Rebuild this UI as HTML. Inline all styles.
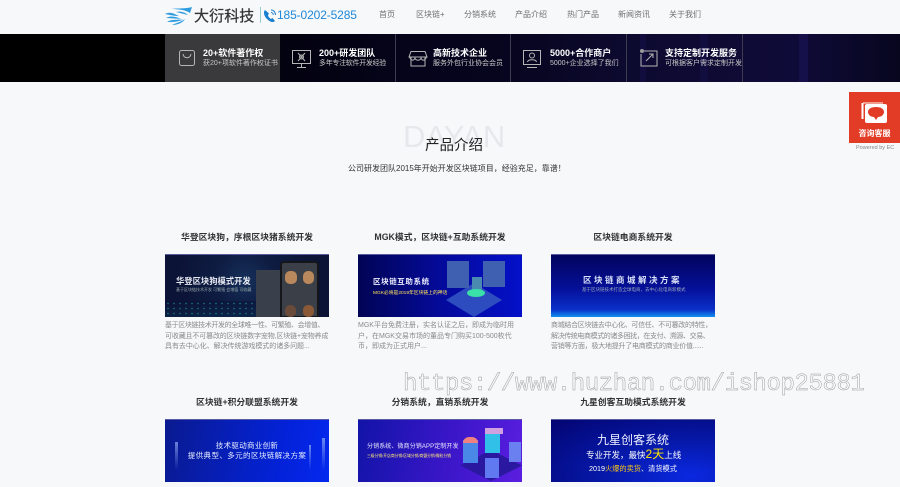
<!DOCTYPE html>
<html lang="zh"><head><meta charset="utf-8"><title>大衍科技</title>
<style>
*{margin:0;padding:0;box-sizing:border-box}
html,body{width:900px;height:487px;overflow:hidden;background:#f6f8fa}
body{position:relative;font-family:"Liberation Sans","Noto Sans CJK SC",sans-serif}
.a{position:absolute;white-space:nowrap}
.nav{top:9px;font-size:8px;color:#707070;line-height:12px}
.band{left:0;top:34px;width:900px;height:48px;background:linear-gradient(90deg,#000 0,#000 165px,#03020f 280px,#05041a 400px,#07051f 510px,#0d0a30 630px,#0f0b38 800px,#0a0828 860px,#07061e 900px)}
.stripe{top:34px;height:48px;background:#15104a}
.div{top:34px;width:1px;height:48px;background:#3c3c50}
.t1{top:47px;font-size:9px;font-weight:bold;color:#fff;line-height:13px}
.t2{top:58px;font-size:7px;color:#c8c8c8;line-height:11px}
.ic{top:44px;width:28px;height:28px}
.h{font-size:8.800px;font-weight:bold;color:#333;line-height:13px;text-align:center;width:164px}
.img{width:164px;height:63px;overflow:hidden;border-top:1px solid #5a5aa0}
.img span,.img i{position:absolute;white-space:nowrap;font-style:normal}
.img div{position:absolute}
.p{font-size:7px;line-height:10.700px;color:#8a8a8a}
.p div{white-space:nowrap}
</style></head><body>

<svg class="a" style="left:165px;top:6px" width="28" height="19" viewBox="0 0 28 19">
<path d="M0 8C6 5 9 8 14 10C9 10 5 9 0 8ZM1 12C6 9 11 11 16 12.500C11 13 6 12 1 12ZM2 16C7 13 12 14 18 13.500C13 16 7 16 2 16ZM7 19C11 17 16 16 20 13C18 17 12 19 7 19ZM6 3C13 2 20 3 27 1L25 7C21 4 13 3 6 3ZM11 6C15 5 20 6 23 9C19 8 15 7 11 6Z" fill="#2f9ce0"/></svg>
<div class="a" style="left:194px;top:7px;font-size:15px;line-height:20px;color:#333;-webkit-text-stroke:.25px #333;letter-spacing:.1px">大衍科技</div>
<div class="a" style="left:260px;top:7px;width:1px;height:16px;background:#9cc"></div>
<svg class="a" style="left:263px;top:8px" width="14" height="15" viewBox="0 0 14 15"><path d="M2 2C0 4 1 8 4 11C7 14 10 15 12 13L9.500 10L8 11C6 10 5 8 5 7L6 5.500Z" fill="#1a7fd0"/><path d="M8 2C10.500 2 12.500 4 12.500 7M8 4.500C9.300 4.500 10.300 5.500 10.300 7" stroke="#1a7fd0" fill="none"/></svg>
<div class="a" style="left:277px;top:7px;font-size:12px;line-height:17px;color:#1f88d8;letter-spacing:-.12px">185-0202-5285</div>
<div class="a nav" style="left:379px">首页</div>
<div class="a nav" style="left:416px">区块链+</div>
<div class="a nav" style="left:464px">分销系统</div>
<div class="a nav" style="left:515px">产品介绍</div>
<div class="a nav" style="left:567px">热门产品</div>
<div class="a nav" style="left:618px">新闻资讯</div>
<div class="a nav" style="left:669px">关于我们</div>

<div class="a band"></div>
<div class="a stripe" style="left:799px;width:9px"></div>
<div class="a stripe" style="left:640px;width:6px;background:#110d3e"></div>
<div class="a stripe" style="left:700px;width:8px;background:#110d3e"></div>
<div class="a" style="left:165px;top:34px;width:115px;height:48px;background:#3a3a3c"></div>
<div class="a div" style="left:395px"></div>
<div class="a div" style="left:510px"></div>
<div class="a div" style="left:626px"></div>
<div class="a div" style="left:742px"></div>

<svg class="a ic" style="left:176px" viewBox="0 0 28 28" fill="none" stroke="#b5b5b5"><rect x="3.500" y="6.500" width="15" height="15" rx="2"/><path d="M7 10C8 15 14 15 15 10"/></svg>
<div class="a t1" style="left:203px">20+软件著作权</div>
<div class="a t2" style="left:203px">获20+项软件著作权证书</div>
<svg class="a ic" style="left:291px" viewBox="0 0 28 28" fill="none" stroke="#b5b5b5"><rect x="1.500" y="6.500" width="18" height="13"/><path d="M10.500 19.500V23M6 23.500H15M7 9L14 17M14 9L7 17"/><circle cx="10.500" cy="13" r="2"/></svg>
<div class="a t1" style="left:319px">200+研发团队</div>
<div class="a t2" style="left:319px;letter-spacing:-.3px">多年专注软件开发经验</div>
<svg class="a ic" style="left:408px" viewBox="0 0 28 28" fill="none" stroke="#b5b5b5"><path d="M3 7.500H17L19 13H1ZM3 13V22H17V13M1.500 13C3 17 6 17 7 14C8 17 12 17 13 14C14 17 17 17 18.500 13"/></svg>
<div class="a t1" style="left:433px">高新技术企业</div>
<div class="a t2" style="left:433px">服务外包行业协会会员</div>
<svg class="a ic" style="left:521px" viewBox="0 0 28 28" fill="none" stroke="#b5b5b5"><rect x="2.500" y="6.500" width="17" height="14"/><circle cx="11" cy="11.500" r="2.500"/><path d="M6.500 18C7 15 15 15 15.500 18M6 23.500H16"/></svg>
<div class="a t1" style="left:550px">5000+合作商户</div>
<div class="a t2" style="left:550px">5000+企业选择了我们</div>
<svg class="a ic" style="left:638px" viewBox="0 0 28 28" fill="none" stroke="#b5b5b5"><path d="M6 7H19V22H3V10"/><path d="M8 17L15 10M11 10H15V14"/><circle cx="4" cy="7" r="2" fill="#999" stroke="none"/></svg>
<div class="a t1" style="left:665px">支持定制开发服务</div>
<div class="a t2" style="left:665px">可根据客户需求定制开发</div>

<div class="a" style="left:403px;top:118px;font-size:31px;line-height:38px;color:#e6e8ec">DAYAN</div>
<div class="a" style="left:425px;top:136px;font-size:14.500px;line-height:20px;color:#222">产品介绍</div>
<div class="a" style="left:348px;top:162px;font-size:8px;line-height:13px;color:#333">公司研发团队2015年开始开发区块链项目，经验充足，靠谱！</div>

<div class="a h" style="left:165px;top:231px">华登区块狗，序根区块猪系统开发</div>
<div class="a h" style="left:358px;top:231px">MGK模式，区块链+互助系统开发</div>
<div class="a h" style="left:551px;top:231px">区块链电商系统开发</div>

<div class="a img" style="left:165px;top:254px;background:radial-gradient(circle at 80px 25px,#16305a 0,#0e1c42 30px,#0b1336 70px)">
<div style="left:0;bottom:0;width:110px;height:16px;opacity:.55;background:radial-gradient(circle,#2fc0c8 .5px,transparent 1px) 0 0/6px 5px,linear-gradient(180deg,#0b1336,#0c2c50)"></div>
<span style="left:11px;top:20px;font-size:8.300px;font-weight:bold;color:#e6e8f0">华登区块狗模式开发</span>
<span style="left:11px;top:32px;font-size:4px;color:#9aa">基于区块链技术开发 可繁殖 会增值 可收藏</span>
<div style="left:91px;top:15px;width:30px;height:48px;background:#39404c"></div>
<div style="left:115px;top:6px;width:39px;height:57px;background:#3b3f48;border:2px solid #15161a;border-radius:4px 4px 0 0"></div>
<div style="left:120px;top:16px;width:12px;height:13px;background:#b9885c;border-radius:5px"></div>
<div style="left:138px;top:16px;width:11px;height:13px;background:#b9885c;border-radius:5px"></div>
<div style="left:138px;top:50px;width:11px;height:12px;background:#8a5a38;border-radius:5px"></div>
<div style="left:120px;top:50px;width:11px;height:12px;background:#6a4a38;border-radius:5px"></div>
</div>
<div class="a img" style="left:358px;top:254px;background:linear-gradient(90deg,#010454 0,#040a9a 50%,#0410c8 100%)">
<span style="left:15px;top:21px;font-size:7.500px;font-weight:bold;color:#eef;letter-spacing:.6px">区块链互助系统</span>
<span style="left:15px;top:34px;font-size:4.800px;color:#ffe45c">MGK必将是2019年区块链上的神话</span>
<div style="left:88px;top:28px;width:56px;height:34px;background:#2c4cc0;clip-path:polygon(50% 0,100% 50%,50% 100%,0 50%)"></div>
<div style="left:89px;top:6px;width:22px;height:27px;background:#3f5fb0"></div>
<div style="left:125px;top:6px;width:22px;height:26px;background:#3f5fb0"></div>
<div style="left:114px;top:22px;width:10px;height:14px;background:#4a8ab0"></div>
<div style="left:109px;top:34px;width:18px;height:8px;background:#39e0a8;border-radius:50%"></div>
</div>
<div class="a img" style="left:551px;top:254px;background:linear-gradient(180deg,#02045c 0,#05109a 55%,#0a30c8 88%,#0f90f0 100%)">
<span style="left:32px;top:19px;font-size:8.500px;font-weight:bold;color:#d8e0f8;letter-spacing:2.500px">区块链商城解决方案</span>
<span style="left:31px;top:32px;font-size:4.500px;color:#9ab">基于区块链技术打造全球电商，去中心化电商新模式</span>
</div>

<div class="a p" style="left:165px;top:321px"><div style="letter-spacing:-.37px">基于区块链技术开发的全球唯一性、可繁殖、会增值、</div><div style="letter-spacing:-.15px">可收藏且不可篡改的区块链数字宠物,区块链+宠物养成</div><div style="letter-spacing:-.05px">具有去中心化、解决传统游戏模式的诸多问题...</div></div>
<div class="a p" style="left:358px;top:321px"><div>MGK平台免费注册，实名认证之后，即成为临时用</div><div>户，在MGK交易市场的董品专门购买100-500枚代</div><div>币，即成为正式用户...</div></div>
<div class="a p" style="left:551px;top:321px"><div style="letter-spacing:-.3px">商城结合区块链去中心化、可信任、不可篡改的特性，</div><div style="letter-spacing:-.4px">解决传统电商模式的诸多困扰，在支付、溯源、交易、</div><div style="letter-spacing:-.25px">营销等方面，极大地提升了电商模式的商业价值......</div></div>

<div class="a h" style="left:165px;top:396px">区块链+积分联盟系统开发</div>
<div class="a h" style="left:358px;top:396px">分销系统，直销系统开发</div>
<div class="a h" style="left:551px;top:396px">九星创客互助模式系统开发</div>

<div class="a img" style="left:165px;top:419px;background:linear-gradient(100deg,#0a1a90 0,#0322d8 70%,#0428ee 100%);text-align:center">
<div style="left:10px;top:22px;width:3px;height:28px;background:linear-gradient(180deg,#6a80d8,transparent)"></div>
<div style="left:157px;top:18px;width:3px;height:32px;background:linear-gradient(180deg,#6a88f0,transparent)"></div>
<div style="left:144px;top:25px;width:2px;height:25px;background:linear-gradient(180deg,#6a88f0,transparent)"></div>
<span style="left:0;width:164px;top:20px;font-size:7.500px;color:#e6ecff;letter-spacing:.3px">技术驱动商业创新</span>
<span style="left:0;width:164px;top:30px;font-size:7.500px;color:#e6ecff;letter-spacing:.4px">提供典型、多元的区块链解决方案</span>
</div>
<div class="a img" style="left:358px;top:419px;background:linear-gradient(100deg,#1214a8 0,#3a16c8 55%,#5a1ee0 100%)">
<span style="left:9px;top:21px;font-size:6px;color:#e8e8ff;letter-spacing:.1px">分销系统、微商分销APP定制开发</span>
<span style="left:9px;top:34px;font-size:3.800px;color:#ffe97a">三级分销/开店商分销/区域分销/商盟分销/微粒分销</span>
<div style="left:102px;top:30px;width:62px;height:31px;background:#2a18a0;clip-path:polygon(50% 0,100% 50%,50% 100%,0 50%)"></div>
<div style="left:105px;top:20px;width:15px;height:23px;background:#4a88e8"></div>
<div style="left:105px;top:17px;width:15px;height:6px;background:#f08080;border-radius:6px 6px 0 0"></div>
<div style="left:127px;top:13px;width:15px;height:20px;background:#30c0e8"></div>
<div style="left:127px;top:8px;width:18px;height:6px;background:#d0a0e0"></div>
<div style="left:127px;top:38px;width:14px;height:20px;background:#6078f0"></div>
<div style="left:151px;top:22px;width:12px;height:20px;background:#6a80f0"></div>
</div>
<div class="a img" style="left:551px;top:419px;background:radial-gradient(ellipse at 85% 90%,#0a28e0 0,#0618a8 45%,#030470 100%)">
<span style="left:0;width:164px;text-align:center;top:11px;font-size:12px;color:#eef0ff">九星创客系统</span>
<span style="left:35px;top:27px;font-size:8.500px;line-height:14px;color:#fff">专业开发，最快<b style="color:#ffe600;font-size:12px;font-weight:normal">2天</b>上线</span>
<span style="left:38px;top:44px;font-size:7.200px;color:#fff">2019<b style="color:#f5c518;font-weight:normal">火爆的卖货</b>、清货模式</span>
</div>

<div class="a" style="left:849px;top:92px;width:51px;height:51px;background:#e23c26"></div>
<svg class="a" style="left:861px;top:100px" width="28" height="27" viewBox="0 0 28 27"><path d="M2 3H22" stroke="#fff"/><path d="M1.500 3V19" stroke="#fff" stroke-width="2"/><rect x="4" y="4" width="22" height="19" rx="2" fill="#fff"/><path d="M15 7C10 7 7 9 7 12C7 15 10 17 13 17L15 20L17 17C20 17 23 15 23 12C23 9 20 7 15 7Z" fill="#e23c26"/></svg>
<div class="a" style="left:849px;top:128px;width:51px;text-align:center;font-size:8px;font-weight:bold;line-height:12px;color:#fff">咨询客服</div>
<div class="a" style="left:856px;top:145px;font-size:5.500px;line-height:7px;color:#888">Powered by EC</div>

<div class="a" style="left:403px;top:371px;font-family:'Liberation Mono',monospace;font-size:24px;line-height:28px;letter-spacing:-.42px;color:#f6f8fa;-webkit-text-stroke:.45px #999">https://www.huzhan.com/ishop25881</div>
</body></html>
